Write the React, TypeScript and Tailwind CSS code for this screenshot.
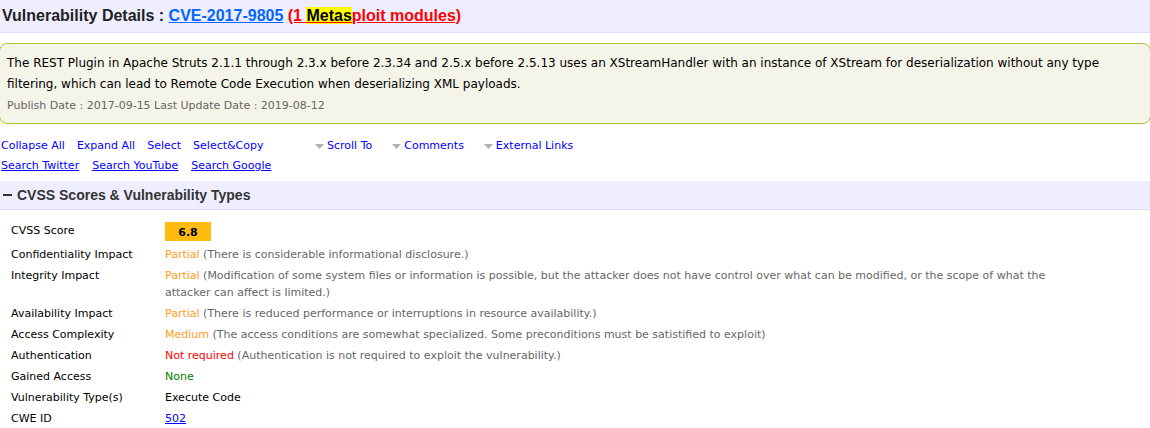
import type { ReactNode } from "react";

type Row = { label: string; value: ReactNode };

type ImpactProps = { level: string; tone: string; note: string };

function Impact({ level, tone, note }: ImpactProps) {
  return (
    <p className="text-[#666666]">
      <span className={tone}>{level}</span> ({note})
    </p>
  );
}

const rows: Row[] = [
  {
    label: "CVSS Score",
    value: (
      <div className="mb-px flex h-[19px] w-[46px] items-center justify-center bg-[#ffbc10] pt-0.5 font-bold">6.8</div>
    ),
  },
  {
    label: "Confidentiality Impact",
    value: <Impact level="Partial" tone="text-[#ff9c20]" note="There is considerable informational disclosure." />,
  },
  {
    label: "Integrity Impact",
    value: (
      <Impact
        level="Partial"
        tone="text-[#ff9c20]"
        note="Modification of some system files or information is possible, but the attacker does not have control over what can be modified, or the scope of what the attacker can affect is limited."
      />
    ),
  },
  {
    label: "Availability Impact",
    value: (
      <Impact
        level="Partial"
        tone="text-[#ff9c20]"
        note="There is reduced performance or interruptions in resource availability."
      />
    ),
  },
  {
    label: "Access Complexity",
    value: (
      <Impact
        level="Medium"
        tone="text-[#ff9c20]"
        note="The access conditions are somewhat specialized. Some preconditions must be satistified to exploit"
      />
    ),
  },
  {
    label: "Authentication",
    value: (
      <Impact
        level="Not required"
        tone="text-[#ff0000]"
        note="Authentication is not required to exploit the vulnerability."
      />
    ),
  },
  { label: "Gained Access", value: <span className="text-[#008000]">None</span> },
  { label: "Vulnerability Type(s)", value: "Execute Code" },
  {
    label: "CWE ID",
    value: (
      <a href="#cwe-502" className="text-[#0000ff] underline">
        502
      </a>
    ),
  },
];

function MenuButton({ label }: { label: string }) {
  return (
    <button type="button" className="flex items-center gap-[3px]">
      <svg width="9" height="5" viewBox="0 0 9 5" fill="#b0b0b0" aria-hidden="true">
        <path d="M0 0h9L4.5 5z" />
      </svg>
      {label}
    </button>
  );
}

export default function App() {
  return (
    <main className="overflow-x-hidden bg-white font-['DejaVu_Sans',Verdana,sans-serif] text-[11px] leading-[17px] text-black">
      <h1 className="border-b border-[#ddddff] bg-[#eeeeff] px-0.5 py-1 font-['Liberation_Sans',Arial,sans-serif] text-base font-bold text-[#222222]">
        Vulnerability Details :{" "}
        <a href="#cve" className="text-[#0066ff] underline">
          CVE-2017-9805
        </a>{" "}
        <a href="#metasploit" className="text-[#ff0000] underline">
          (1 <mark className="bg-[#ffff00] text-black">Metas</mark>ploit modules)
        </a>
      </h1>

      <section className="-mx-px mt-2.5 rounded-lg border border-[#a9c52f] bg-[#f4f4e8] px-[7px] pt-[9px] pb-[7px] leading-[21px]">
        <p className="pr-6 text-xs leading-[21px]">
          The REST Plugin in Apache Struts 2.1.1 through 2.3.x before 2.3.34 and 2.5.x before 2.5.13 uses an
          XStreamHandler with an instance of XStream for deserialization without any type filtering, which can lead to
          Remote Code Execution when deserializing XML payloads.
        </p>
        <p className="text-[#666666]">Publish Date : 2017-09-15 Last Update Date : 2019-08-12</p>
      </section>

      <nav className="mt-3 flex flex-col pl-px leading-5 text-[#0000ff]">
        <div className="flex">
          <div className="flex w-[314px] gap-3">
            <button type="button">Collapse All</button>
            <button type="button">Expand All</button>
            <button type="button">Select</button>
            <button type="button">Select&amp;Copy</button>
          </div>
          <div className="flex gap-5">
            <MenuButton label="Scroll To" />
            <MenuButton label="Comments" />
            <MenuButton label="External Links" />
          </div>
        </div>
        <div className="flex gap-[13px] underline">
          <a href="#twitter">Search Twitter</a>
          <a href="#youtube">Search YouTube</a>
          <a href="#google">Search Google</a>
        </div>
      </nav>

      <section className="mt-[5px]">
        <h2 className="border-b border-[#ddddff] bg-[#eeeeff] px-[3px] py-1 font-['Liberation_Sans',Arial,sans-serif] text-sm font-bold text-[#333333]">
          <button type="button" className="flex items-center gap-[5px]">
            <svg width="9" height="2" viewBox="0 0 9 2" fill="#333333" aria-hidden="true">
              <path d="M0 0h9v2H0z" />
            </svg>
            CVSS Scores &amp; Vulnerability Types
          </button>
        </h2>
        <table className="ml-[11px] mt-2.5">
          <tbody>
            {rows.map((row) => (
              <tr key={row.label}>
                <th scope="row" className="w-[154px] min-w-[154px] py-0.5 text-left align-top font-normal">
                  {row.label}
                </th>
                <td className="py-0.5 pr-20 align-top">{row.value}</td>
              </tr>
            ))}
          </tbody>
        </table>
      </section>
    </main>
  );
}
